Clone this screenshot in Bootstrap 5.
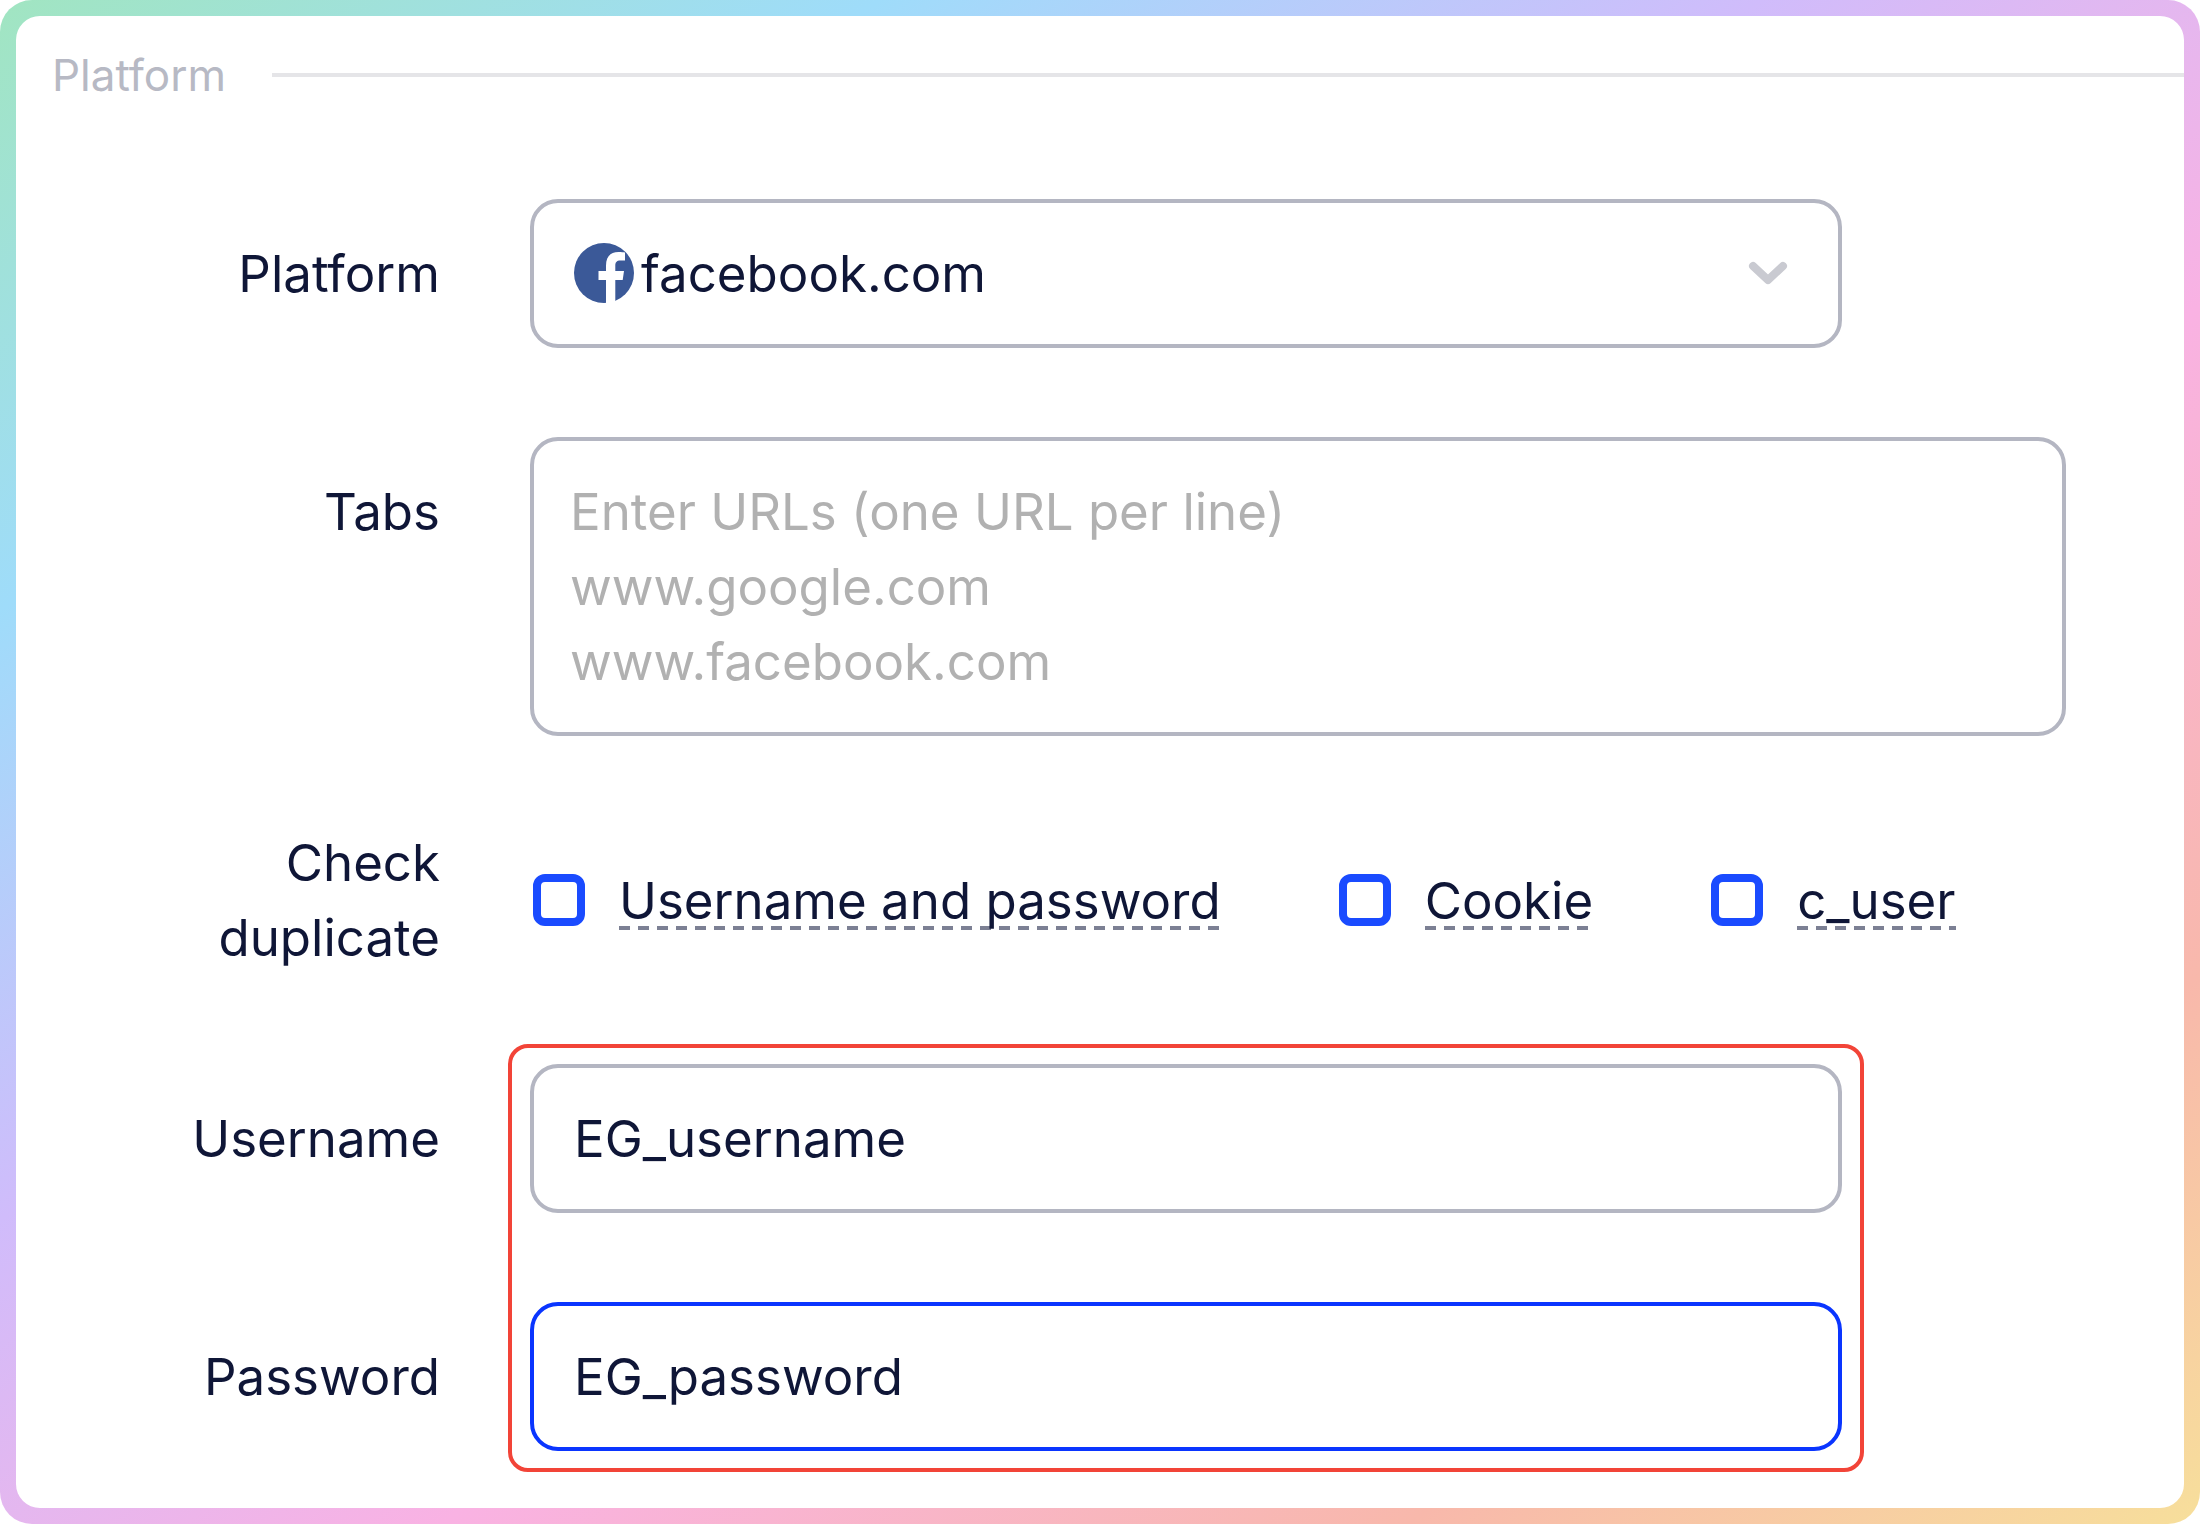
<!DOCTYPE html>
<html lang="en">
<head>
<meta charset="utf-8">
<meta name="viewport" content="width=device-width, initial-scale=1">
<title>Platform</title>
<link rel="stylesheet" href="https://cdn.jsdelivr.net/npm/bootstrap@5.3.0/dist/css/bootstrap.min.css">
<style>
  :root {
    --ink: #0f1637;
    --outline: #b4b6c2;
    --blue: #1a4bff;
  }
  body {
    font-family: Inter, "Liberation Sans", sans-serif;
    font-size: 51px;
    line-height: 75px;
    color: var(--ink);
    background: #fff;
  }
  .gradient-frame {
    padding: 16px;
    border-radius: 32px;
    background: linear-gradient(to bottom right, #a1e5c1 0%, #9fdcfa 20%, #d0bcfb 40%, #f9b2e3 60%, #f8b8ab 82%, #f7df9b 100%);
  }
  .panel { border-radius: 24px; }
  .section-title {
    font-size: 44px;
    line-height: 56px;
    color: #b7b9c4;
    padding: 31px 0 0 36px;
    gap: 46px;
  }
  .section-rule { height: 4px; background: #e5e5e8; }
  .form-body { padding: 96px 118px 0 124px; gap: 89px; }
  .field-row { gap: 90px; }
  .field-label { width: 300px; padding-top: 37px; }
  .field-label.two-line { padding-top: 0; }
  .field-box.form-control, .field-box.form-select {
    font-size: 51px;
    line-height: 75px;
    color: var(--ink);
    border: 4px solid var(--outline);
    border-radius: 28px;
    padding: 33px 40px;
    background: #fff;
    box-shadow: none;
  }
  .field-box.form-select { height: 149px; padding-left: 107px; }
  textarea.field-box.form-control { height: 299px; padding: 33px 36px; resize: none; overflow: hidden; }
  .field-box::placeholder { color: #b1b1b1; opacity: 1; }
  .field-box.is-active { border-color: #0a35ff; }
  .narrow { max-width: 1312px; }
  .site-icon { left: 44px; top: 44px; width: 60px; height: 60px; pointer-events: none; }
  .chevron { right: 53px; top: 60px; width: 42px; height: 29px; pointer-events: none; }
  .check-group { gap: 118px; padding-left: 3px; }
  .check-item { gap: 34px; }
  .check-item .form-check-input {
    width: 52px;
    height: 52px;
    margin: 0;
    border: 8px solid var(--blue);
    border-radius: 12px;
  }
  .hint-label {
    background: repeating-linear-gradient(90deg, #7c8094 0 11px, transparent 11px 19px) 0 63px / 100% 4px no-repeat;
  }
  .credentials { gap: 89px; }
  .highlight {
    inset: -20px -22px -21px;
    border: 4px solid #f24438;
    border-radius: 20px;
    pointer-events: none;
  }
  .label-stack { width: 300px; gap: 89px; }
  .label-stack .field-label { height: 149px; }
  .page-end { height: 57px; }
</style>
</head>
<body>
<main class="gradient-frame">
  <form class="panel bg-white overflow-hidden">
    <div class="section-title d-flex align-items-center">
      <span>Platform</span>
      <div class="section-rule flex-grow-1"></div>
    </div>

    <div class="form-body d-flex flex-column">
      <div class="field-row d-flex">
        <label class="field-label flex-shrink-0 text-end" for="platform">Platform</label>
        <div class="flex-grow-1">
          <div class="narrow position-relative">
            <select class="field-box form-select" id="platform">
              <option selected>facebook.com</option>
            </select>
            <svg class="site-icon position-absolute" viewBox="0 0 60 60" aria-hidden="true">
              <circle cx="30" cy="30" r="30" fill="#3b5998"/>
              <path fill="#fff" d="M32 61V37h-7.500v-9H32v-5.500C32 13.500 36.500 9 44.500 9c3 0 5 .2 6.500.5v8h-4.500c-4 0-5.200 2-5.200 5V28H50l-1.300 9h-7.400V61z"/>
            </svg>
            <svg class="chevron position-absolute" viewBox="0 0 42 29" fill="none" stroke="#c9cad1" stroke-width="8" stroke-linecap="round" stroke-linejoin="round" aria-hidden="true">
              <path d="M6 7l15 14L36 7"/>
            </svg>
          </div>
        </div>
      </div>

      <div class="field-row d-flex">
        <label class="field-label flex-shrink-0 text-end" for="tabs">Tabs</label>
        <div class="flex-grow-1">
          <textarea class="field-box form-control d-block" id="tabs" rows="3" placeholder="Enter URLs (one URL per line)&#10;www.google.com&#10;www.facebook.com"></textarea>
        </div>
      </div>

      <div class="field-row d-flex align-items-center" role="group" aria-labelledby="dup-label">
        <div class="field-label two-line flex-shrink-0 text-end" id="dup-label">Check duplicate</div>
        <div class="check-group flex-grow-1 d-flex">
          <div class="check-item d-flex align-items-center">
            <input class="form-check-input" type="checkbox" id="dup-login">
            <label class="hint-label" for="dup-login">Username and password</label>
          </div>
          <div class="check-item d-flex align-items-center">
            <input class="form-check-input" type="checkbox" id="dup-cookie">
            <label class="hint-label" for="dup-cookie">Cookie</label>
          </div>
          <div class="check-item d-flex align-items-center">
            <input class="form-check-input" type="checkbox" id="dup-user">
            <label class="hint-label" for="dup-user">c_user</label>
          </div>
        </div>
      </div>

      <div class="field-row d-flex">
        <div class="label-stack d-flex flex-column flex-shrink-0">
          <label class="field-label text-end" for="username">Username</label>
          <label class="field-label text-end" for="password">Password</label>
        </div>
        <div class="flex-grow-1">
          <div class="credentials narrow position-relative d-flex flex-column">
            <input class="field-box form-control" type="text" id="username" value="EG_username">
            <input class="field-box form-control is-active" type="text" id="password" value="EG_password">
            <div class="highlight position-absolute"></div>
          </div>
        </div>
      </div>
    </div>
    <div class="page-end"></div>
  </form>
</main>
<script src="https://cdn.jsdelivr.net/npm/bootstrap@5.3.0/dist/js/bootstrap.bundle.min.js"></script>
</body>
</html>
